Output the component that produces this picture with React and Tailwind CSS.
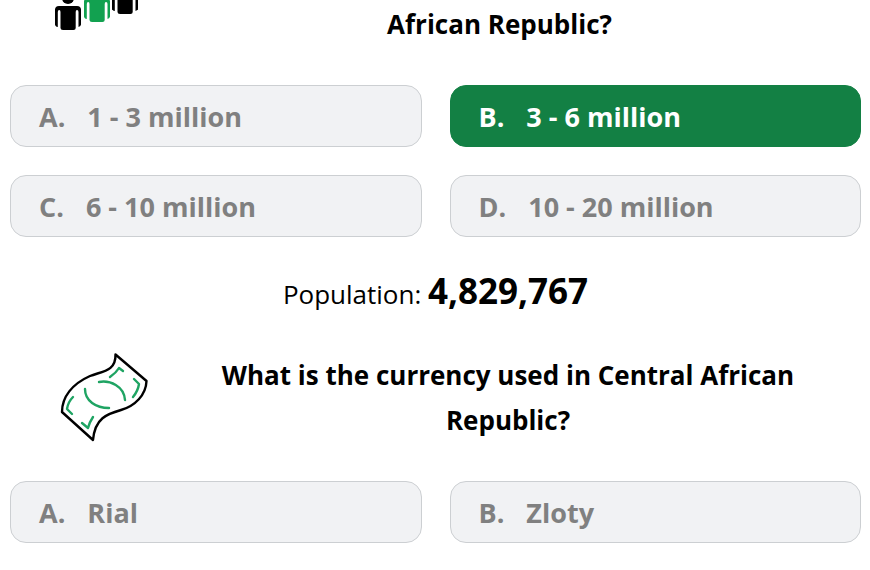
import React, { useState } from 'react';
import clsx from 'clsx';

const populationOptions = [
  { letter: 'A', label: '1 - 3 million' },
  { letter: 'B', label: '3 - 6 million' },
  { letter: 'C', label: '6 - 10 million' },
  { letter: 'D', label: '10 - 20 million' },
];

const currencyOptions = [
  { letter: 'A', label: 'Rial' },
  { letter: 'B', label: 'Zloty' },
];

const personBody = 'M4 0H22Q26 0 26 4V18Q26 20.500 23.500 21V6Q23.500 4 22 4Q20.700 4 20.700 6V22Q20.700 24 18.500 24H8Q5.500 24 5.500 22V6Q5.500 4 4.200 4Q2.800 4 2.800 6V21Q0 20.500 0 18V4Q0 0 4 0Z';

function PeopleIcon() {
  return (
    <svg viewBox="0 0 86 34" className="w-[86px] h-[34px] shrink-0" aria-hidden="true">
      <circle cx="14" cy="-2" r="6" />
      <path d={personBody} transform="translate(1 6)" />
      <path d={personBody} transform="translate(30 -2)" fill="#12a150" />
      <path d={personBody} transform="translate(58 -10)" />
      <g fill="none" strokeWidth="1.500">
        <path stroke="#000" d="M2 9V25M26 9V25M59 -7V10M83 -7V10" />
        <path stroke="#12a150" d="M31 1V17M55 1V17" />
      </g>
    </svg>
  );
}

function BanknoteIcon() {
  return (
    <svg viewBox="0 2 90 90" className="w-[90px] h-[90px] shrink-0" fill="none" strokeWidth="2.400" strokeLinecap="round" strokeLinejoin="round" aria-hidden="true">
      <path stroke="#000" d="M56.500 3.500L87.500 30C87 44 76 55 62 59C48 63 36 67 34 89L3 61C3 46 13 33 31 25C44 20 57 20 56.500 3.500z" />
      <g stroke="#1fa463">
        <path d="M40 31C51 29 65 35 66 49M26 38C26 50 37 57 50 57" />
        <path d="M51 26Q57 22 60 17L64 20M75 28L80 33Q79 40 74 46M14 46Q9 51 8 58L13 63M23 72L29 77Q30 72 34 66" />
      </g>
    </svg>
  );
}

function Options({ name, options, answer }) {
  const [selected, setSelected] = useState(answer);

  return (
    <div className="grid grid-cols-2 gap-7" role="group" aria-label={name}>
      {options.map(({ letter, label }) => (
        <button
          key={letter}
          type="button"
          onClick={() => setSelected(letter)}
          className={clsx(
            'flex items-center gap-[22px] h-[62px] px-7 pt-[2px] rounded-2xl border text-[27px] font-bold',
            selected === letter
              ? 'bg-[#138044] border-[#138044] text-white'
              : 'bg-[#f1f2f4] border-[#cccfd2] text-[#808080]'
          )}
        >
          <span>{letter}.</span>
          <span>{label}</span>
        </button>
      ))}
    </div>
  );
}

export default function App() {
  return (
    <main className="bg-white pl-[10px] pr-[9px] pb-7 text-black font-['Open_Sans','Noto_Sans',sans-serif]">
      {/* Population */}
      <div className="flex items-start gap-12 h-[85px] pl-[44px] pr-[50px]">
        <PeopleIcon />
        <h2 className="flex-1 pt-[2px] text-center text-[26px] leading-[45px] font-bold">African Republic?</h2>
      </div>
      <Options name="Population" options={populationOptions} answer="B" />
      <p className="pt-7 text-center text-[26px] leading-[52px]">
        Population: <strong className="text-[35px] font-bold">4,829,767</strong>
      </p>

      {/* Currency */}
      <div className="flex items-start gap-12 pt-[33px] pb-[38px] pl-[49px] pr-[42px]">
        <BanknoteIcon />
        <h2 className="flex-1 text-center text-[26px] leading-[45px] font-bold">
          What is the currency used in Central African Republic?
        </h2>
      </div>
      <Options name="Currency" options={currencyOptions} />
    </main>
  );
}
